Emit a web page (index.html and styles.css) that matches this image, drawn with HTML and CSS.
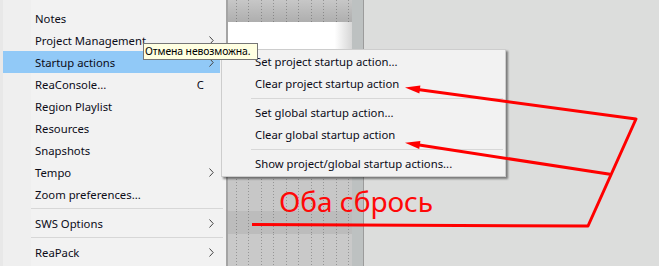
FILE: index.html
```html
<!DOCTYPE html>
<html lang="ru">
<head>
    <meta charset="UTF-8">
    <title>Startup actions</title>
    <link rel="stylesheet" href="styles.css">
</head>
<body>
    <div class="screen">
        <div class="menu">
            <div class="menu-top"></div>
            <div class="item"><span class="label">Notes</span><span class="arrow"></span></div>
            <div class="item"><span class="label">Project Management</span><span class="arrow"><svg width="5" height="9" viewBox="0 0 5 9"><polyline points="0.5,0.5 4.2,4.5 0.5,8.5"/></svg></span></div>
            <div class="item active"><span class="label">Startup actions</span><span class="arrow"><svg width="5" height="9" viewBox="0 0 5 9"><polyline points="0.5,0.5 4.2,4.5 0.5,8.5"/></svg></span></div>
            <div class="item"><span class="label">ReaConsole...</span><span class="shortcut">C</span><span class="arrow"></span></div>
            <div class="item"><span class="label">Region Playlist</span><span class="arrow"></span></div>
            <div class="item"><span class="label">Resources</span><span class="arrow"></span></div>
            <div class="item"><span class="label">Snapshots</span><span class="arrow"></span></div>
            <div class="item"><span class="label">Tempo</span><span class="arrow"><svg width="5" height="9" viewBox="0 0 5 9"><polyline points="0.5,0.5 4.2,4.5 0.5,8.5"/></svg></span></div>
            <div class="item"><span class="label">Zoom preferences...</span><span class="arrow"></span></div>
            <div class="sep"></div>
            <div class="item"><span class="label">SWS Options</span><span class="arrow"><svg width="5" height="9" viewBox="0 0 5 9"><polyline points="0.5,0.5 4.2,4.5 0.5,8.5"/></svg></span></div>
            <div class="sep"></div>
            <div class="item"><span class="label">ReaPack</span><span class="arrow"><svg width="5" height="9" viewBox="0 0 5 9"><polyline points="0.5,0.5 4.2,4.5 0.5,8.5"/></svg></span></div>
        </div>

        <div class="track">
            <div class="ruler grid"></div>
            <div class="clip"></div>
            <div class="lane grid"></div>
            <div class="lane dark grid"></div>
            <div class="lane last grid"></div>
        </div>
        <div class="gutter"></div>
        <div class="divider"></div>
        <div class="rest"></div>
    </div>

    <div class="submenu">
        <div class="sub-item">Set project startup action...</div>
        <div class="sub-item">Clear project startup action</div>
        <div class="sub-sep"></div>
        <div class="sub-item">Set global startup action...</div>
        <div class="sub-item">Clear global startup action</div>
        <div class="sub-sep"></div>
        <div class="sub-item">Show project/global startup actions...</div>
    </div>

    <div class="tooltip">Отмена невозможна.</div>

    <!-- пометки поверх скриншота -->
    <svg class="marks" width="659" height="266" viewBox="0 0 659 266">
        <polyline points="252,224.5 588,226 636,119 416,89.2"/>
        <polyline points="610,174.3 416,144.5"/>
        <polygon points="405,87.5 420.4,85.4 419.4,93.5"/>
        <polygon points="405,142.7 420.4,140.9 419.2,149"/>
    </svg>
    <div class="note">Оба сбрось</div>
</body>
</html>
```

FILE: styles.css
```css
body {
    margin: 0;
    width: 659px;
    height: 266px;
    overflow: hidden;
    position: relative;
    background: #dcdddc;
    font-family: 'Noto Sans', sans-serif;
    font-size: 11.3px;
    color: #0c0c18;
}

.screen {
    display: flex;
    height: 266px;
}

/* главное меню */
.menu {
    width: 223px;
    flex: none;
    border-left: 3px solid #e8e8e8;
    background: linear-gradient(90deg, #efefef 0 28px, #f2f2f2 28px);
}

.menu-top {
    height: 7px;
}

.item {
    display: flex;
    align-items: center;
    height: 22px;
    width: 217px;
    box-sizing: border-box;
    padding-left: 32px;
    padding-right: 6px;
}

.item.active {
    background: #91c9f7;
}

.item .label {
    flex: 1;
    white-space: nowrap;
}

.item .shortcut {
    margin-right: 5px;
}

.item .arrow {
    width: 5px;
    height: 9px;
    display: flex;
}

.item .arrow polyline {
    fill: none;
    stroke: #444;
    stroke-width: 1;
}

.sep {
    height: 7px;
    margin: 0 3px 0 28px;
    background: linear-gradient(#d7d7d7, #d7d7d7) 0 3px / 100% 1px no-repeat;
}

/* дорожки за меню */
.track {
    width: 124px;
    flex: none;
    border-left: 2px solid #a4a4a4;
    display: flex;
    flex-direction: column;
}

.grid {
    position: relative;
}

.grid::before {
    content: '';
    position: absolute;
    inset: 0;
    background: repeating-linear-gradient(90deg, transparent 0 8px, rgba(0, 0, 0, 0.25) 8px 9px, transparent 9px 12.45px);
    -webkit-mask-image: repeating-linear-gradient(to bottom, #000 0 1px, transparent 1px 3px);
    mask-image: repeating-linear-gradient(to bottom, #000 0 1px, transparent 1px 3px);
}

.ruler {
    height: 22px;
    background: linear-gradient(#c7c7c7, #aeaeae);
}

.clip {
    height: 28px;
    background: linear-gradient(90deg, #fff 86%, #d6d6d6);
}

.lane {
    height: 161px;
    background: #c7c7c7;
}

.lane.dark {
    height: 23px;
    background: #bcbcbc;
}

.lane.last {
    flex: 1;
    background: #c9c9c9;
}

.gutter {
    width: 11px;
    flex: none;
    background: #bdc1c1;
}

.divider {
    width: 1px;
    flex: none;
    background: #9b9b9b;
}

.rest {
    flex: 1;
}

/* подменю */
.submenu {
    position: absolute;
    left: 221px;
    top: 49px;
    width: 283px;
    padding: 1px 0;
    background: #f2f2f2;
    border: 1px solid #cdcdcd;
    box-shadow: 2px 2px 2px rgba(0, 0, 0, 0.45);
}

.sub-item {
    height: 22px;
    line-height: 22px;
    padding-left: 33px;
    white-space: nowrap;
}

.sub-sep {
    height: 7px;
    margin: 0 2px 0 29px;
    background: linear-gradient(#d7d7d7, #d7d7d7) 0 3px / 100% 1px no-repeat;
}

.tooltip {
    position: absolute;
    left: 143px;
    top: 43px;
    width: 112px;
    height: 15px;
    line-height: 15px;
    padding-left: 1px;
    background: #ffffe1;
    border: 1px solid #767676;
    font-size: 10.4px;
    letter-spacing: -0.1px;
    color: #000;
    white-space: nowrap;
    overflow: hidden;
}

/* красные пометки */
.marks {
    position: absolute;
    left: 0;
    top: 0;
}

.marks polyline {
    fill: none;
    stroke: #ff0000;
    stroke-width: 3;
    stroke-linejoin: round;
}

.marks polygon {
    fill: #ff0000;
}

.note {
    position: absolute;
    left: 279px;
    top: 183px;
    font-size: 28px;
    line-height: 36px;
    color: #ff0808;
    white-space: nowrap;
}
```
